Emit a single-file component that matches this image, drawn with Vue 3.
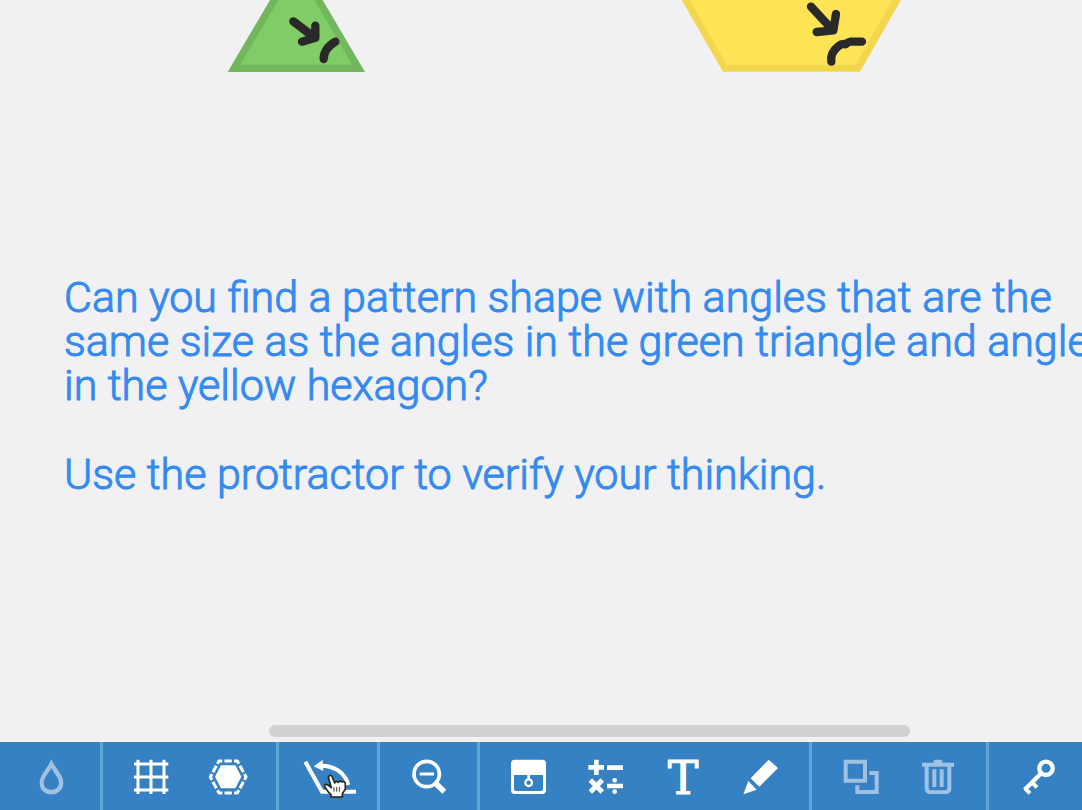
<script setup>
const question =
  'Can you find a pattern shape with angles that are the\nsame size as the angles in the green triangle and angle\nin the yellow hexagon?'
const hint = 'Use the protractor to verify your thinking.'
</script>

<template>
  <div class="app">
    <main class="board">
      <svg class="shape triangle" viewBox="0 0 540 270" role="img" aria-label="Green triangle">
        <path d="M53 216L259-134L465 216Z" fill="#73b75d" />
        <path d="M91 194L259-91L427 194Z" fill="#80cc67" />
        <g class="ink">
          <path d="M250 64L314 113M316 77L316 113L276 125" />
          <path d="M376 125Q341 146 341 177" />
        </g>
      </svg>
      <svg class="shape hexagon" viewBox="0 0 720 270" role="img" aria-label="Yellow hexagon">
        <path d="M35 0L159 215H570L693 0Z" fill="#f2d74e" />
        <path d="M59 0L171 194H557L667 0Z" fill="#ffe555" />
        <g class="ink">
          <path d="M423 20L488 90M498 42L490 91L440 96" />
          <path d="M576 125H542Q534 126 526 133Q516 130 506 138Q480 158 484 185" />
        </g>
      </svg>

      <section class="prompt">
        <p>{{ question }}</p>
        <p>{{ hint }}</p>
      </section>

      <div class="scroll-thumb"></div>
    </main>

    <nav class="toolbar" aria-label="Tools">
      <div class="group">
        <button type="button" class="dim" aria-label="Fill" disabled>
          <svg viewBox="90 66 120 120">
            <path fill="#fff" fill-rule="evenodd" d="M154 73C165 98 190 120 190 143C190 165 173 178 154 178C135 178 119 165 119 143C119 120 144 98 154 73ZM154 99C145 117 131 129 131 143C131 157 141 164 154 164C167 164 177 157 177 143C177 129 163 117 154 99Z" />
          </svg>
        </button>
      </div>

      <div class="group">
        <button type="button" aria-label="Grid">
          <svg viewBox="393 66 120 120">
            <path class="line" stroke-width="9" d="M414 74V177M453 74V177M492 74V177M402 87H505M402 126H505M402 165H505" />
          </svg>
        </button>
        <button type="button" aria-label="Pattern shapes">
          <svg viewBox="624 66 120 120">
            <path fill="#fff" d="M663 91H706L724 125L706 160H663L645 125Z" />
            <path class="line" stroke-width="9" stroke-linejoin="round" pathLength="60" stroke-dasharray="3.6 1.2 4 1.2" stroke-dashoffset="1.8" d="M657 78H712L738 126L712 174H657L631 126Z" />
          </svg>
        </button>
      </div>

      <div class="group">
        <button type="button" aria-label="Protractor">
          <svg class="wide" viewBox="90 111 168 120">
            <path class="line" stroke-width="12" d="M106 125L156 215H258" />
            <path class="line" stroke-width="12" d="M235 195C225 158 193 137 154 137" />
            <path fill="#fff" d="M131 139L158 120L160 153Z" />
            <path fill="#fff" stroke="#22281f" stroke-width="5" stroke-linejoin="round" d="M175 172Q180 160 187 171L194 189Q199 181 205 187Q211 180 216 186Q227 182 226 196V208L217 221V231H183V224L174 215L164 199Q163 190 174 195L184 203Z" />
            <path class="hand-lines" d="M192 201V215M200 201V215M208 201V215" />
          </svg>
        </button>
      </div>

      <div class="group">
        <button type="button" aria-label="Zoom out">
          <svg viewBox="415 111 120 120">
            <circle class="line" stroke-width="11" cx="468" cy="162" r="38" />
            <path class="line" stroke-width="9" d="M447 162H490" />
            <path class="line" stroke-width="17" d="M493 188L521 215" />
          </svg>
        </button>
      </div>

      <div class="group">
        <button type="button" aria-label="Show or hide">
          <svg viewBox="117 111 120 120">
            <path fill="#fff" fill-rule="evenodd" d="M134 119H217Q228 119 228 130V211Q228 222 217 222H134Q123 222 123 211V130Q123 119 134 119ZM132 165V207Q132 213 138 213H213Q219 213 219 207V165Z" />
            <path class="line" stroke-width="8" d="M176 165V178" />
            <circle class="line" stroke-width="7" cx="176" cy="188" r="10" />
          </svg>
        </button>
        <button type="button" aria-label="Math">
          <svg viewBox="348 111 120 120">
            <path class="line" stroke-width="14" d="M379 119V165M355 142H402M411 143H459M411 198H459" />
            <path class="line" stroke-width="15" d="M361 180L397 216M397 180L361 216" />
            <circle cx="434" cy="181" r="7" fill="#fff" />
            <circle cx="434" cy="215" r="7" fill="#fff" />
          </svg>
        </button>
        <button type="button" aria-label="Text">
          <svg viewBox="0 0 40 40">
            <text class="letter" x="20" y="37" text-anchor="middle">T</text>
          </svg>
        </button>
        <button type="button" aria-label="Draw">
          <svg viewBox="270 66 120 120">
            <path fill="#fff" d="M356 74L384 99L328 155L302 130ZM295 138L320 164L280 178Z" />
          </svg>
        </button>
      </div>

      <div class="group">
        <button type="button" class="dim" aria-label="Duplicate" disabled>
          <svg viewBox="121 111 120 120">
            <path fill="#fff" fill-rule="evenodd" d="M129 119H199V188H129ZM141 131V176H187V131Z" />
            <path fill="#fff" d="M206 153H234V222H164V196H176V210H222V165H206Z" />
          </svg>
        </button>
        <button type="button" class="dim" aria-label="Delete" disabled>
          <svg viewBox="352 111 120 120">
            <path fill="#fff" fill-rule="evenodd" d="M399 128V123Q399 119 404 119H420Q425 119 425 123V128H460V140H452V204Q452 222 434 222H390Q372 222 372 204V140H364V128ZM384 140V203Q384 211 392 211H431Q440 211 440 203V140Z" />
            <path class="line" stroke-width="12" d="M401 148V201M423 148V201" />
          </svg>
        </button>
      </div>

      <div class="group last">
        <button type="button" aria-label="Key">
          <svg viewBox="656 111 120 120">
            <circle class="line" stroke-width="13" cx="737" cy="145" r="20" />
            <path class="line" stroke-width="13" d="M724 158L673 209" />
            <path class="line" stroke-width="12" d="M695 187L710 202M674 205L689 220" />
          </svg>
        </button>
      </div>
    </nav>
  </div>
</template>

<style>
body {
  margin: 0;
}
</style>

<style scoped>
.app {
  display: flex;
  flex-direction: column;
  min-height: 100vh;
  background: #f1f1f3;
  font-family: Roboto, "Liberation Sans", sans-serif;
}

.board {
  position: relative;
  flex: 1;
  display: flex;
  flex-direction: column;
  justify-content: space-between;
  overflow: hidden;
}

.shape {
  position: absolute;
  top: 0;
  height: 90px;
}

.triangle {
  left: 210px;
  width: 180px;
}

.hexagon {
  left: 670px;
  width: 240px;
}

.ink {
  fill: none;
  stroke: #292929;
  stroke-width: 25;
  stroke-linecap: round;
  stroke-linejoin: round;
}

.prompt {
  padding: 275px 0 0 64px;
  color: #338af3;
  font-size: 43px;
  font-weight: 300;
  line-height: 44px;
  white-space: pre;
  -webkit-text-stroke: 1px #338af3;
}

.prompt p {
  margin: 0 0 45px;
}

.scroll-thumb {
  width: 59.2%;
  height: 12px;
  margin: 0 0 5px 24.9%;
  border-radius: 6px;
  background: #d1d1d2;
}

.toolbar {
  display: grid;
  grid-template-columns: 103fr 176fr 101fr 100fr 332fr 177fr 93fr;
  height: 68px;
  overflow: hidden;
  background: #3681c4;
}

.group {
  display: flex;
  justify-content: center;
  min-width: 0;
  border-right: 3px solid #5fa4d2;
}

.group.last {
  justify-content: flex-start;
  padding-left: 11px;
  border-right: 0;
}

button {
  display: flex;
  flex: none;
  align-items: center;
  justify-content: center;
  width: 77px;
  padding: 2px 0 0;
  border: 0;
  background: none;
}

button svg {
  flex: none;
  width: 40px;
  height: 40px;
  overflow: visible;
}

button .wide {
  width: 56px;
}

.dim svg {
  opacity: 0.52;
}

.line {
  fill: none;
  stroke: #fff;
}

.hand-lines {
  fill: none;
  stroke: #3c3c3c;
  stroke-width: 3;
}

.letter {
  fill: #fff;
  stroke: #fff;
  stroke-width: 1px;
  font-family: "DejaVu Serif", serif;
  font-size: 46px;
}
</style>
